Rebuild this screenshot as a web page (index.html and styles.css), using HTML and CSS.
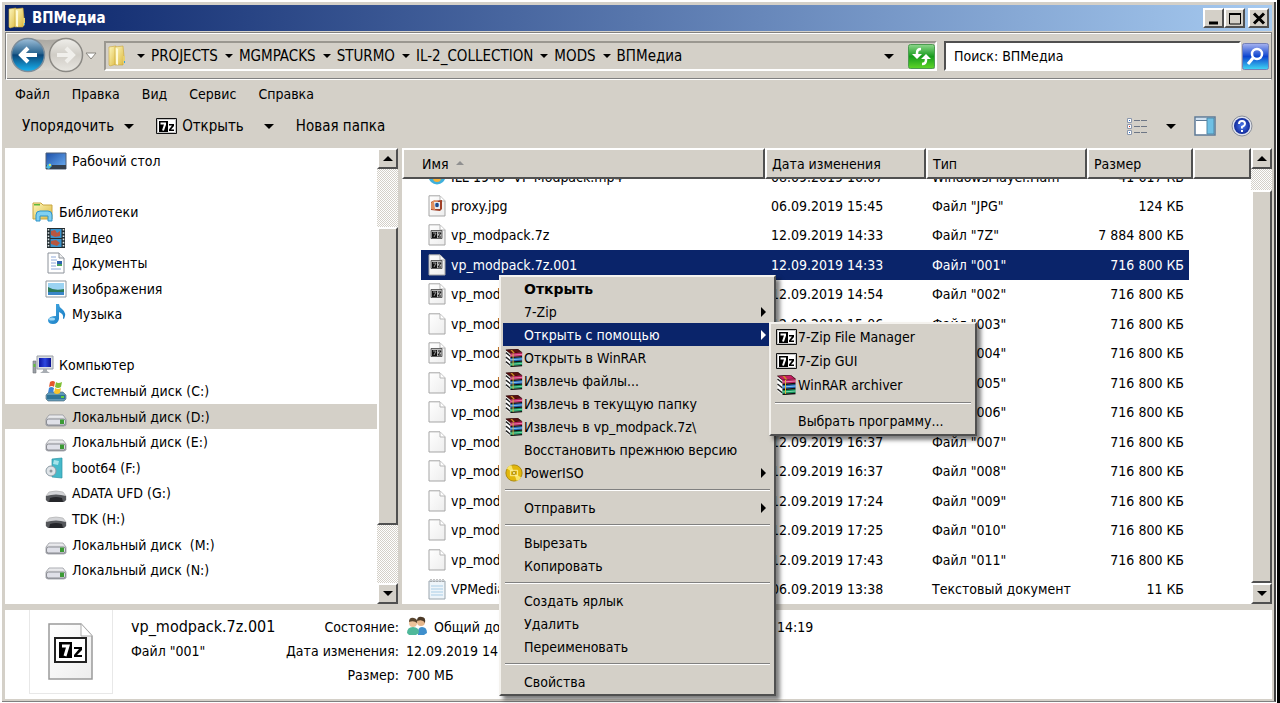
FILE: index.html
```html
<!DOCTYPE html>
<html lang="ru">
<head>
    <meta charset="UTF-8">
    <meta name="viewport" content="width=device-width, initial-scale=1.0">
    <title>ВПМедиа</title>
    <link rel="stylesheet" href="styles.css">
</head>
<body>
    <svg class="sprite" aria-hidden="true">
        <defs>
            <linearGradient id="gFolder" x1="0" y1="0" x2="1" y2="1"><stop offset="0" stop-color="#fdf7bd"/><stop offset="1" stop-color="#dcb83e"/></linearGradient>
            <linearGradient id="gPage" x1="0" y1="0" x2="1" y2="1"><stop offset="0" stop-color="#fff"/><stop offset="1" stop-color="#ededed"/></linearGradient>
            <linearGradient id="gDesk" x1="0" y1="0" x2="1" y2="1"><stop offset="0" stop-color="#1c4fa8"/><stop offset="1" stop-color="#6fb2f5"/></linearGradient>
            <linearGradient id="gDisk" x1="0" y1="0" x2="0" y2="1"><stop offset="0" stop-color="#f4f4f6"/><stop offset="1" stop-color="#a6a8b0"/></linearGradient>
            <linearGradient id="gBack" x1="0" y1="0" x2="0" y2="1"><stop offset="0" stop-color="#9fc0da"/><stop offset=".45" stop-color="#2a648f"/><stop offset=".5" stop-color="#0b4678"/><stop offset="1" stop-color="#18b4f2"/></linearGradient>
            <linearGradient id="gFwd" x1="0" y1="0" x2="0" y2="1"><stop offset="0" stop-color="#efeeea"/><stop offset=".5" stop-color="#d0cdc6"/><stop offset="1" stop-color="#e9e7e2"/></linearGradient>
            <linearGradient id="gBridge" x1="0" y1="0" x2="0" y2="1"><stop offset="0" stop-color="#a9a6a0"/><stop offset="1" stop-color="#dedbd4"/></linearGradient>
            <linearGradient id="gGreen" x1="0" y1="0" x2="0" y2="1"><stop offset="0" stop-color="#8fd78d"/><stop offset=".5" stop-color="#169c1c"/><stop offset="1" stop-color="#5fd628"/></linearGradient>
            <linearGradient id="gSearch" x1="0" y1="0" x2="0" y2="1"><stop offset="0" stop-color="#a9b4f0"/><stop offset=".5" stop-color="#0c44cf"/><stop offset="1" stop-color="#3fd8f4"/></linearGradient>
            <linearGradient id="gNote" x1="0" y1="0" x2="1" y2="1"><stop offset="0" stop-color="#4aaee6"/><stop offset="1" stop-color="#1478c0"/></linearGradient>
            <linearGradient id="gScreen" x1="0" y1="0" x2="1" y2="0"><stop offset="0" stop-color="#0a12a0"/><stop offset=".5" stop-color="#2d48e0"/><stop offset="1" stop-color="#0a1090"/></linearGradient>
            <radialGradient id="gHelp"><stop offset="0" stop-color="#4f7cf0"/><stop offset="1" stop-color="#10299a"/></radialGradient>
        </defs>

        <symbol id="folder" viewBox="0 0 20 22">
            <path d="M2 2l7-1 1 18-7 2-1-1z" fill="url(#gFolder)" stroke="#cda83a" stroke-width=".6"/>
            <path d="M8 2l8-1 1 10-1 9H8z" fill="url(#gFolder)" stroke="#c9a437" stroke-width=".6"/>
            <path d="M9 3l2 1v16l-2-1z" fill="#fffbd8"/>
            <path d="M16 11h2v7l-2 1z" fill="#e6cf70"/><path d="M17 16h1v2h-1z" fill="#39a0d8"/>
        </symbol>
        <symbol id="seven" viewBox="0 0 21 16">
            <path d="M.5.5h20v15H.5z" fill="#fff" stroke="#111"/><path d="M1.500 1.500h18v13h-18z" fill="none" stroke="#888" stroke-width=".5"/>
            <path d="M3 3h9v11H3z" fill="#000"/>
            <path d="M4.500 5.500h4.500v1L7 12.500" fill="none" stroke="#fff" stroke-width="2"/>
            <path d="M13 6h5v2l-3 3.500h3V13h-5v-1.500l3-4h-3z" fill="#000"/>
        </symbol>
        <symbol id="page" viewBox="0 0 18 22">
            <path d="M1 .8h11l5 5V21H1z" fill="url(#gPage)" stroke="#a5a5a5"/>
            <path d="M12 1v5h5" fill="#fff" stroke="#b5b5b5"/>
        </symbol>
        <symbol id="page7z" viewBox="0 0 18 22">
            <use href="#page"/>
            <path d="M3 6.500h11v8H3z" fill="#bbb" stroke="#444" stroke-width=".8"/>
            <path d="M4 8h5v6H4z" fill="#111"/><path d="M5 9h3l-2 4" fill="none" stroke="#999"/><path d="M10 9h3l-3 4h3" fill="none" stroke="#111"/>
        </symbol>
        <symbol id="pagejpg" viewBox="0 0 18 22">
            <use href="#page"/>
            <path d="M3 7l2-1 9-1v9l-2 2-9-1z" fill="#a04028"/><path d="M3 8l3-3 4 1-3 9-4-1z" fill="#e09060"/>
            <path d="M6 7h6v7H7z" fill="#eee"/><circle cx="9" cy="10" r="2.200" fill="#3f77c8"/><path d="M9 8v4" stroke="#123"/>
        </symbol>
        <symbol id="notepad" viewBox="0 0 18 22">
            <path d="M1 3h16v18H1z" fill="#eef5fa" stroke="#9aa5ad"/>
            <path d="M3 8h12M3 11h12M3 14h12M3 17h12" stroke="#a9cde6"/>
            <path d="M3 1v4M6 1v4M9 1v4M12 1v4M15 1v4" stroke="#888" stroke-dasharray="1 1"/>
        </symbol>
        <symbol id="media" viewBox="0 0 18 22">
            <circle cx="9" cy="11" r="8.500" fill="#3fb0dc"/><circle cx="9" cy="13" r="4" fill="#f5b23a"/>
        </symbol>
        <symbol id="desktop" viewBox="0 0 22 20">
            <path d="M1 2h20v16H1z" fill="url(#gDesk)" stroke="#4c5f78"/>
            <path d="M1 14h20v4H1z" fill="#35404d"/><path d="M2 14l3-2 2 3-3 3-3-1z" fill="#49b8e0"/><path d="M4 13h2v2H4z" fill="#cfe070"/>
        </symbol>
        <symbol id="libs" viewBox="0 0 22 20">
            <path d="M1 1h8l2 2h9v14H1z" fill="url(#gFolder)" stroke="#c9a640"/><path d="M2 2h6v1.500H2z" fill="#5fb83a"/>
            <path d="M4 19v-6q0-4 4-4h8q4 0 4 4v6h-4v-5H8v5z" fill="#7fd0f2" stroke="#2f93c8"/>
        </symbol>
        <symbol id="video" viewBox="0 0 22 22">
            <path d="M2 1h18v20H2z" fill="#222c30"/><path d="M5.500 2h11v9h-11zM5.500 12h11v8h-11z" fill="#3a93cc"/>
            <path d="M6 4l4-1 2 3 3-2v5l-5 1-4-2zM6 14l5-1 4 3-3 3-6-2z" fill="#b8563f"/>
            <path d="M3.500 2v18M18.500 2v18" stroke="#dde5e8" stroke-width="1.600" stroke-dasharray="1.600 1.600"/>
        </symbol>
        <symbol id="docs" viewBox="0 0 22 22">
            <path d="M3 1h11l5 5v15H3z" fill="#fff" stroke="#8c929a"/><path d="M14 1v5h5" fill="#eee" stroke="#8c929a"/>
            <path d="M6 5h5M6 8h6M6 11h5M6 14h5M6 17h10" stroke="#8fa9d8"/><path d="M12 9h5v5h-5z" fill="#2b62b0"/><path d="M12 12h5v2h-5z" fill="#49a060"/>
        </symbol>
        <symbol id="pics" viewBox="0 0 22 20">
            <path d="M1 2h20v16H1z" fill="#fff" stroke="#8f979e"/><path d="M3 4h16v12H3z" fill="#9bd3f2"/>
            <path d="M3 8q6 4 16 2v3H3z" fill="#2c7a58"/><path d="M3 13h16v3H3z" fill="#3a86c8"/>
        </symbol>
        <symbol id="music" viewBox="0 0 22 22">
            <path d="M11 1h3q0 3 3 5 5 4 2 10-1 0-1-1 1-4-4-6v7q-1 5-6 5-5 0-5-4 1-4 8-4z" fill="url(#gNote)"/><ellipse cx="7" cy="16" rx="3" ry="1.500" fill="#9ed8f7"/>
        </symbol>
        <symbol id="computer" viewBox="0 0 22 20">
            <path d="M1 6h3v12H1z" fill="#9aa0a6" stroke="#6e7378" stroke-width=".6"/><path d="M1.500 9h2v3h-2z" fill="#62c040"/>
            <path d="M5 1h16v13H5z" fill="#d9dde2" stroke="#9a9fa6"/><path d="M7 3h12v9H7z" fill="url(#gScreen)"/>
            <path d="M11 14h4v2l3 2H8l3-2z" fill="#a8adb3"/>
        </symbol>
        <symbol id="sysdisk" viewBox="0 0 22 22">
            <path d="M1 15l3-3h14l3 3v4l-2 2H3l-2-2z" fill="#5d99b8" stroke="#587080" stroke-width=".7"/><path d="M2 15h18v4H2z" fill="#2f7397"/><path d="M16 16h3v2h-3z" fill="#60d040"/>
            <path d="M5 2q3-2 5 0l-1 5q-2-2-5 0z" fill="#e4572c"/><path d="M11 2q2 2 6 0l-1 5q-3 2-6 0z" fill="#7fbf35"/>
            <path d="M4 8q2-2 5 0l-1 5q-3-2-5 0z" fill="#3b83d6"/><path d="M10 8q3 2 6 0l-1 5q-3 2-6 0z" fill="#f7c32c"/>
        </symbol>
        <symbol id="disk" viewBox="0 0 22 22">
            <path d="M4 9h14l3 4v6l-2 1H3l-2-1v-6z" fill="url(#gDisk)" stroke="#888b92" stroke-width=".7"/>
            <rect x="1.500" y="13" width="19" height="6" rx="2" fill="#dfe0e8" stroke="#8a8c92"/><path d="M15 13.500h4v4.500h-4z" fill="#3c9a35"/>
        </symbol>
        <symbol id="boot" viewBox="0 0 22 22">
            <path d="M7 2l10-1v20l-10-1z" fill="#45b9c9" stroke="#2c93a4" stroke-width=".7"/><path d="M9 3l5 1-1 4-5-1z" fill="#a6e4ea"/>
            <circle cx="6" cy="14" r="5" fill="#dfe4e8" stroke="#8b9aa3"/><circle cx="6" cy="14" r="1.500" fill="#8d969c"/>
        </symbol>
        <symbol id="usb" viewBox="0 0 22 22">
            <path d="M4 10q7-2 14 0l3 4v4l-2 1q-8-3-16 0l-2-1v-4z" fill="#d4d5d8" stroke="#aaa" stroke-width=".6"/>
            <path d="M1 14q10-3 20 0v4l-2 2H3l-2-2z" fill="#55575b"/><path d="M5 16q6-2 12 0l1 4H4z" fill="#25262a"/>
        </symbol>
        <symbol id="rar" viewBox="0 0 20 20">
            <path d="M1 2l5 4v14l-5-4z" fill="#fff"/>
            <path d="M1 4l5 4M1 9l5 4M1 14l5 4" stroke="#222" stroke-width="1.500"/>
            <path d="M1 1l13-1 5 4-13 1z" fill="currentColor" stroke="#200" stroke-width=".7"/>
            <path d="M6 5l13-1v4L6 9z" fill="#b8205c"/>
            <path d="M6 10l13-1v4L6 14z" fill="#1f66b8"/>
            <path d="M6 15l13-1v4L6 19z" fill="#12935a"/>
            <path d="M6 7l13-1" stroke="#ee8ab4"/><path d="M6 12l13-1" stroke="#8cc8f0"/><path d="M6 17l13-1" stroke="#80dcb0"/>
            <path d="M6 9.500l13-1M6 14.500l13-1M6 19.500l13-1" stroke="#111" stroke-width="1.300"/>
            <path d="M9 5v14" stroke="#d8b83c"/><path d="M6 1h2l3 3.500H9z" fill="#c98e24"/>
        </symbol>
        <symbol id="iso" viewBox="0 0 20 20">
            <circle cx="10" cy="10" r="9" fill="#e2b70c" stroke="#a8860a"/><path d="M10 10L2 5a9 9 0 0 1 5-4zM10 10l8 5a9 9 0 0 1-5 4z" fill="#f8e468"/>
            <path d="M6 7h8v6H6z" fill="none" stroke="#fff2a0"/><path d="M8.500 8.500h3v3h-3z" fill="#fff6c0" stroke="#a8860a"/>
        </symbol>
        <symbol id="people" viewBox="0 0 22 20">
            <path d="M12 19q-1-8 4-8t5 6l-3 2z" fill="#3f8fcc"/><circle cx="15" cy="6" r="4" fill="#e6b78c"/><path d="M11 5q0-5 5-4 4 0 3 6-2-4-8-2z" fill="#4c3a28"/>
            <path d="M1 17q0-6 6-6t6 6l-3 2H3z" fill="#4fb89a"/><circle cx="7" cy="7" r="4" fill="#edc39b"/><path d="M3 6q0-5 5-4 4 1 3 5-3-3-8-1z" fill="#5a4630"/>
        </symbol>
    </svg>

    <div class="window">
        <div class="titlebar">
            <svg class="title-icon"><use href="#folder"/></svg>
            <span class="title-text">ВПМедиа</span>
            <div class="title-buttons">
                <button class="btn-3d" aria-label="Свернуть"><svg width="14" height="13"><path d="M2 11h9" stroke="#000" stroke-width="3"/></svg></button>
                <button class="btn-3d" aria-label="Развернуть"><svg width="14" height="13"><path d="M1.500 1v11h11V1" fill="none" stroke="#000"/><path d="M1 2h12" stroke="#000" stroke-width="2"/></svg></button>
                <button class="btn-3d btn-close" aria-label="Закрыть"><svg width="14" height="13"><path d="M2 1.500l10 10M12 1.500l-10 10" stroke="#000" stroke-width="3"/></svg></button>
            </div>
        </div>

        <div class="navbar">
            <button class="nav-arrows" aria-label="Назад и вперёд">
                <svg width="92" height="38" viewBox="0 0 92 38">
                    <path d="M19 1q18 4 38 0v34q-20-4-38 0z" fill="url(#gBridge)"/>
                    <circle cx="19" cy="18" r="16.500" fill="url(#gBack)" stroke="#7d8d9a" stroke-width="1.500"/>
                    <path d="M28 18H12M19 11l-7 7 7 7" fill="none" stroke="#fff" stroke-width="4"/>
                    <circle cx="57" cy="18" r="16.500" fill="url(#gFwd)" stroke="#8b8984" stroke-width="1.500"/>
                    <path d="M48 18h16M57 11l7 7-7 7" fill="none" stroke="#f0efeb" stroke-width="4"/>
                    <path d="M77 16h10l-5 6z" fill="#fff" stroke="#8a8780"/>
                </svg>
            </button>
            <div class="address">
                <svg class="address-icon"><use href="#folder"/></svg>
                <nav class="crumbs">
                    <a href="#">PROJECTS</a>
                    <a href="#">MGMPACKS</a>
                    <a href="#">STURMO</a>
                    <a href="#">IL-2_COLLECTION</a>
                    <a href="#">MODS</a>
                    <a href="#">ВПМедиа</a>
                </nav>
                <span class="arrow-down address-drop"></span>
                <button class="icon-btn" aria-label="Обновить">
                    <svg width="27" height="25"><rect x=".5" y=".5" width="26" height="24" rx="2" fill="url(#gGreen)" stroke="#4c9a50"/>
                    <path d="M13 5q-4 0-4 4v3M14 20q4 0 4-4v-3" fill="none" stroke="#fff" stroke-width="2.500"/><path d="M4 10h10l-5 5zM13 15h10l-5-5z" fill="#fff"/></svg>
                </button>
            </div>
            <input class="search" type="text" value="Поиск: ВПМедиа" aria-label="Поиск">
            <button class="icon-btn search-btn" aria-label="Найти">
                <svg width="27" height="27"><rect x=".5" y=".5" width="26" height="26" rx="2" fill="url(#gSearch)" stroke="#7480b8"/>
                <circle cx="15" cy="11" r="5" fill="none" stroke="#fff" stroke-width="2.500"/><path d="M11 15l-5 6" stroke="#fff" stroke-width="3"/></svg>
            </button>
        </div>

        <div class="menubar">
            <button>Файл</button>
            <button>Правка</button>
            <button>Вид</button>
            <button>Сервис</button>
            <button>Справка</button>
        </div>

        <div class="toolbar">
            <button class="tool">Упорядочить <span class="arrow-down"></span></button>
            <button class="tool tool-open"><svg class="seven"><use href="#seven"/></svg>Открыть</button>
            <button class="tool" aria-label="Открыть с помощью"><span class="arrow-down"></span></button>
            <button class="tool">Новая папка</button>
            <div class="tool-right">
                <button class="tool" aria-label="Вид">
                    <svg width="22" height="20"><path d="M1.500 2.500h4v4h-4zM1.500 8.500h4v4h-4zM1.500 14.500h4v4h-4z" fill="#fff" stroke="#8a97ad"/><path d="M3 4h1v1H3zM3 16h1v1H3z" fill="#2a70d0"/><path d="M3 10h1v1H3z" fill="#d03020"/><path d="M8 4.500h13M8 10.500h13M8 16.500h13" stroke="#6d7685" stroke-dasharray="6 1"/></svg>
                </button>
                <span class="arrow-down"></span>
                <button class="tool" aria-label="Область просмотра">
                    <svg width="22" height="20"><path d="M1 1h20v18H1z" fill="#fff" stroke="#5d7a96" stroke-width="1.500"/><path d="M2 2h18v2H2z" fill="#cfe0f0"/><path d="M2 4.500h11" stroke="#5d7a96"/><path d="M13 2h7v16h-7z" fill="#6fc0e4" stroke="#4f88a8"/></svg>
                </button>
                <button class="tool help" aria-label="Справка">
                    <svg width="22" height="22"><circle cx="11" cy="11" r="10" fill="#dfe3ee" stroke="#8a8f9a"/><circle cx="11" cy="11" r="8" fill="url(#gHelp)"/><path d="M8 9q0-3 3-3t3 3q0 1.500-3 3v1.500" fill="none" stroke="#fff" stroke-width="2"/><path d="M10 15h2v2h-2z" fill="#fff"/></svg>
                </button>
            </div>
        </div>

        <div class="panes">
            <div class="sidebar">
                <ul class="tree">
                    <li class="sub"><svg><use href="#desktop"/></svg>Рабочий стол</li>
                    <li></li>
                    <li><svg><use href="#libs"/></svg>Библиотеки</li>
                    <li class="sub"><svg><use href="#video"/></svg>Видео</li>
                    <li class="sub"><svg><use href="#docs"/></svg>Документы</li>
                    <li class="sub"><svg><use href="#pics"/></svg>Изображения</li>
                    <li class="sub"><svg><use href="#music"/></svg>Музыка</li>
                    <li></li>
                    <li><svg><use href="#computer"/></svg>Компьютер</li>
                    <li class="sub"><svg><use href="#sysdisk"/></svg>Системный диск (C:)</li>
                    <li class="sub current"><svg><use href="#disk"/></svg>Локальный диск (D:)</li>
                    <li class="sub"><svg><use href="#disk"/></svg>Локальный диск (E:)</li>
                    <li class="sub"><svg><use href="#boot"/></svg>boot64 (F:)</li>
                    <li class="sub"><svg><use href="#usb"/></svg>ADATA UFD (G:)</li>
                    <li class="sub"><svg><use href="#usb"/></svg>TDK (H:)</li>
                    <li class="sub"><svg><use href="#disk"/></svg>Локальный диск&nbsp; (M:)</li>
                    <li class="sub"><svg><use href="#disk"/></svg>Локальный диск (N:)</li>
                </ul>
                <div class="scrollbar">
                    <button class="btn-3d" aria-label="Вверх"><span class="arrow-up"></span></button>
                    <div class="track"><div class="thumb thumb-tree"></div></div>
                    <button class="btn-3d" aria-label="Вниз"><span class="arrow-down"></span></button>
                </div>
            </div>

            <div class="files">
                <div class="file-list">
                    <table class="file-table">
                        <colgroup>
                            <col>
                            <col class="col-date">
                            <col class="col-type">
                            <col class="col-size">
                            <col class="col-rest">
                        </colgroup>
                        <thead>
                            <tr><th>Имя <span class="sort-mark"></span></th><th>Дата изменения</th><th>Тип</th><th>Размер</th><th></th></tr>
                        </thead>
                        <tbody>
                            <tr class="cut"><td><div><svg><use href="#media"/></svg>ILL-1946--VP-Modpack.mp4</div></td><td><div>08.09.2019 16:07</div></td><td><div>WindowsPlayer.Ham</div></td><td><div>41 617 КБ</div></td><td></td></tr>
                            <tr><td><svg><use href="#pagejpg"/></svg>proxy.jpg</td><td>06.09.2019 15:45</td><td>Файл "JPG"</td><td>124 КБ</td><td></td></tr>
                            <tr><td><svg><use href="#page7z"/></svg>vp_modpack.7z</td><td>12.09.2019 14:33</td><td>Файл "7Z"</td><td>7 884 800 КБ</td><td></td></tr>
                            <tr class="selected"><td><svg><use href="#page7z"/></svg>vp_modpack.7z.001</td><td>12.09.2019 14:33</td><td>Файл "001"</td><td>716 800 КБ</td><td></td></tr>
                            <tr><td><svg><use href="#page7z"/></svg>vp_modpack.7z.002</td><td>12.09.2019 14:54</td><td>Файл "002"</td><td>716 800 КБ</td><td></td></tr>
                            <tr><td><svg><use href="#page"/></svg>vp_modpack.7z.003</td><td>12.09.2019 15:06</td><td>Файл "003"</td><td>716 800 КБ</td><td></td></tr>
                            <tr><td><svg><use href="#page7z"/></svg>vp_modpack.7z.004</td><td>12.09.2019 15:21</td><td>Файл "004"</td><td>716 800 КБ</td><td></td></tr>
                            <tr><td><svg><use href="#page"/></svg>vp_modpack.7z.005</td><td>12.09.2019 15:48</td><td>Файл "005"</td><td>716 800 КБ</td><td></td></tr>
                            <tr><td><svg><use href="#page"/></svg>vp_modpack.7z.006</td><td>12.09.2019 16:12</td><td>Файл "006"</td><td>716 800 КБ</td><td></td></tr>
                            <tr><td><svg><use href="#page"/></svg>vp_modpack.7z.007</td><td>12.09.2019 16:37</td><td>Файл "007"</td><td>716 800 КБ</td><td></td></tr>
                            <tr><td><svg><use href="#page"/></svg>vp_modpack.7z.008</td><td>12.09.2019 16:37</td><td>Файл "008"</td><td>716 800 КБ</td><td></td></tr>
                            <tr><td><svg><use href="#page"/></svg>vp_modpack.7z.009</td><td>12.09.2019 17:24</td><td>Файл "009"</td><td>716 800 КБ</td><td></td></tr>
                            <tr><td><svg><use href="#page"/></svg>vp_modpack.7z.010</td><td>12.09.2019 17:25</td><td>Файл "010"</td><td>716 800 КБ</td><td></td></tr>
                            <tr><td><svg><use href="#page"/></svg>vp_modpack.7z.011</td><td>12.09.2019 17:43</td><td>Файл "011"</td><td>716 800 КБ</td><td></td></tr>
                            <tr><td><svg><use href="#notepad"/></svg>VPMedia.txt</td><td>06.09.2019 13:38</td><td>Текстовый документ</td><td>11 КБ</td><td></td></tr>
                        </tbody>
                    </table>
                </div>
                <div class="scrollbar">
                    <button class="btn-3d" aria-label="Вверх"><span class="arrow-up"></span></button>
                    <div class="track"><div class="thumb thumb-files"></div></div>
                    <button class="btn-3d" aria-label="Вниз"><span class="arrow-down"></span></button>
                </div>
            </div>
        </div>

        <div class="details">
            <div class="preview">
                <svg width="46" height="58" viewBox="0 0 46 58">
                    <path d="M1 1h32l11 12v43H1z" fill="url(#gPage)" stroke="#9a9a9a" stroke-width="1.500"/><path d="M33 1v12h11" fill="#fff" stroke="#aaa"/>
                    <path d="M7 15h31v24H7z" fill="#fff" stroke="#222" stroke-width="2"/>
                    <path d="M11 19h13v16H11z" fill="#000"/><path d="M14 23h6l-3 10" fill="none" stroke="#fff" stroke-width="3"/>
                    <path d="M26 24h8v3l-5 5h5v2h-8v-2l5-6h-5z" fill="#000"/>
                </svg>
            </div>
            <div class="details-name">
                <div class="name">vp_modpack.7z.001</div>
                <div>Файл "001"</div>
            </div>
            <dl class="props">
                <dt>Состояние:</dt><dd><svg class="people"><use href="#people"/></svg>Общий доступ</dd>
                <dt>Дата изменения:</dt><dd>12.09.2019 14:33</dd>
                <dt>Размер:</dt><dd>700 МБ</dd>
            </dl>
            <dl class="props">
                <dt>Дата создания:</dt><dd>12.09.2019 14:19</dd>
            </dl>
        </div>

        <div class="menu context-menu">
            <button class="default">Открыть</button>
            <button class="more">7-Zip</button>
            <button class="more active">Открыть с помощью</button>
            <button><svg><use href="#rar"/></svg>Открыть в WinRAR</button>
            <button><svg><use href="#rar"/></svg>Извлечь файлы...</button>
            <button><svg><use href="#rar"/></svg>Извлечь в текущую папку</button>
            <button><svg><use href="#rar"/></svg>Извлечь в vp_modpack.7z\</button>
            <button>Восстановить прежнюю версию</button>
            <button class="more"><svg><use href="#iso"/></svg>PowerISO</button>
            <hr>
            <button class="more">Отправить</button>
            <hr>
            <button>Вырезать</button>
            <button>Копировать</button>
            <hr>
            <button>Создать ярлык</button>
            <button>Удалить</button>
            <button>Переименовать</button>
            <hr>
            <button>Свойства</button>
        </div>

        <div class="menu open-with">
            <button><svg><use href="#seven"/></svg>7-Zip File Manager</button>
            <button><svg><use href="#seven"/></svg>7-Zip GUI</button>
            <button><svg><use href="#rar"/></svg>WinRAR archiver</button>
            <hr>
            <button>Выбрать программу...</button>
        </div>
    </div>
</body>
</html>
```
FILE: styles.css
```css
:root {
    --face: #d4d0c8;
    --shadow: #808080;
    --dark: #404040;
    --select: #0a246a;
}

* {
    box-sizing: border-box;
}

body {
    margin: 0;
    padding: 2px 1px 1px 2px;
    height: 100vh;
    overflow: hidden;
    background: #fff;
    border-right: 3px solid #000;
    font: 14px/20px "DejaVu Sans Condensed", "DejaVu Sans", sans-serif;
    color: #000;
}

button {
    font: inherit;
    color: inherit;
    background: none;
    border: none;
    padding: 0;
}

a {
    color: inherit;
    text-decoration: none;
}

.sprite {
    position: absolute;
    width: 0;
    height: 0;
}

.window {
    position: relative;
    height: 100%;
    display: flex;
    flex-direction: column;
    background: var(--face);
    border-right: 2px solid var(--dark);
    border-bottom: 1px solid var(--shadow);
    padding: 3px 2px 2px 3px;
}

/* 3D элементы */
.btn-3d,
.thumb {
    background: var(--face);
    border: 2px solid;
    border-color: #fff #505050 #505050 #fff;
}

.btn-3d {
    display: flex;
    align-items: center;
    justify-content: center;
}

.arrow-down,
.arrow-up {
    display: inline-block;
    border: 5px solid transparent;
    border-bottom-width: 0;
    border-top-color: #000;
}

.arrow-up {
    border-width: 0 5px 5px;
    border-bottom-color: #000;
}

/* Заголовок */
.titlebar {
    display: flex;
    align-items: center;
    height: 26px;
    padding: 0 3px 0 2px;
    background: linear-gradient(to right, var(--select), #a6caf0);
}

.title-icon {
    width: 20px;
    height: 22px;
}

.title-text {
    flex: 1;
    padding-left: 5px;
    color: #fff;
    font-size: 15px;
    font-weight: bold;
}

.title-buttons {
    display: flex;
}

.title-buttons .btn-3d {
    width: 21px;
    height: 20px;
}

.title-buttons .btn-close {
    margin-left: 3px;
}

/* Адресная строка */
.navbar {
    display: flex;
    align-items: center;
    height: 48px;
    margin-top: 1px;
    border: 1px solid var(--shadow);
    border-bottom-color: #fff;
    box-shadow: inset 1px 1px #fff, inset 0 -1px var(--shadow);
    padding: 0 2px 0 3px;
}

.nav-arrows {
    height: 38px;
}

.address {
    flex: 1;
    display: flex;
    align-items: center;
    height: 30px;
    margin-left: 3px;
    padding-left: 1px;
    border: 2px solid;
    border-color: #9a9790 #fff #fff #9a9790;
}

.address-icon {
    width: 20px;
    height: 22px;
}

.crumbs {
    flex: 1;
    display: flex;
    padding-left: 3px;
    font-size: 15px;
}

.crumbs a::before {
    content: "";
    display: inline-block;
    margin: 0 6px 3px 7px;
    border: 4px solid transparent;
    border-top-color: #000;
    border-bottom: none;
}

.address-drop {
    margin-right: 14px;
}

.icon-btn {
    display: flex;
}

.search {
    width: 297px;
    height: 30px;
    margin: 0 1px 0 7px;
    padding: 0 8px;
    border: 2px solid;
    border-color: #505050 #fff #fff #505050;
    border-radius: 0;
    background: #fff;
    font: inherit;
    color: inherit;
}

/* Меню и панель инструментов */
.menubar {
    display: flex;
    gap: 22px;
    padding: 4px 10px;
}

.toolbar {
    display: flex;
    align-items: center;
    height: 40px;
    padding: 0 19px 4px 17px;
    font-size: 15px;
}

.tool {
    display: flex;
    align-items: center;
}

.tool .arrow-down {
    margin: 0 22px 0 10px;
}

.tool-open {
    gap: 5px;
}

.toolbar .seven {
    width: 21px;
    height: 16px;
}

.tool-open + .tool {
    padding-left: 10px;
}

.tool-right {
    display: flex;
    align-items: center;
    gap: 18px;
    margin-left: auto;
}

.help {
    margin-left: -3px;
}

/* Панели */
.panes {
    flex: 1;
    display: flex;
    min-height: 0;
}

.sidebar {
    display: flex;
    width: 393px;
    background: #fff;
}

.tree {
    flex: 1;
    display: grid;
    grid-auto-rows: 1fr;
    margin: 0;
    padding: 0 0 21px;
    list-style: none;
}

.tree li {
    display: flex;
    align-items: center;
    gap: 5px;
    padding-left: 27px;
    min-height: 0;
}

.tree .sub {
    padding-left: 40px;
}

.tree .current {
    background: var(--face);
}

.tree svg {
    width: 22px;
    height: 22px;
}

.scrollbar {
    display: flex;
    flex-direction: column;
    width: 21px;
}

.scrollbar .btn-3d {
    height: 21px;
}

.track {
    flex: 1;
    position: relative;
    background: repeating-conic-gradient(#fff 0 25%, var(--face) 0 50%) 0 0 / 2px 2px;
}

.thumb {
    position: absolute;
    left: 0;
    right: 0;
}

.thumb-tree {
    top: 14%;
    bottom: 14%;
}

.thumb-files {
    top: 5%;
    bottom: 0;
}

.files {
    flex: 1;
    display: flex;
    margin-left: 4px;
    background: #fff;
}

.file-list {
    flex: 1;
}

.file-table {
    width: 100%;
    height: 100%;
    table-layout: fixed;
    border-collapse: separate;
    border-spacing: 0;
}

.col-date,
.col-type {
    width: 161px;
}

.col-size {
    width: 106px;
}

.col-rest {
    width: 58px;
}

.file-table th {
    height: 31px;
    padding: 0 0 0 5px;
    background: var(--face);
    border: 2px solid;
    border-color: #fff #505050 #505050 #fff;
    font-weight: normal;
    text-align: left;
}

.file-table th:first-child {
    padding-left: 18px;
}

.sort-mark {
    display: inline-block;
    margin: 0 0 4px 3px;
    border: 4px solid transparent;
    border-top: none;
    border-bottom-color: #909090;
}

.file-table td {
    padding: 0 0 0 6px;
    white-space: nowrap;
    background-clip: padding-box;
}

.file-table td:first-child {
    padding-left: 7px;
    border-left: 19px solid transparent;
}

.file-table td:nth-child(4) {
    padding: 0 5px 0 0;
    border-right: 4px solid transparent;
    text-align: right;
}

.file-table svg {
    width: 18px;
    height: 22px;
    margin: -4px 5px -4px 0;
    vertical-align: -2px;
}

/* Верхняя строка наполовину прокручена под заголовок */
.cut td {
    height: 12px;
}

.cut div {
    display: flex;
    align-items: flex-end;
    height: 12px;
    overflow: hidden;
    line-height: 28px;
}

.cut td:nth-child(4) div {
    justify-content: flex-end;
}

.cut svg {
    flex: none;
    margin: 0 5px 4px 0;
}

.selected td:not(:last-child) {
    background-color: var(--select);
    color: #fff;
}

/* Сведения о файле */
.details {
    display: flex;
    height: 89px;
    margin-top: 6px;
    background: #fff;
    line-height: 24px;
}

.preview {
    display: flex;
    align-items: center;
    justify-content: center;
    width: 84px;
    height: 84px;
    margin-left: 24px;
    border: 1px solid #e8e8e8;
    border-top: none;
}

.details-name {
    width: 150px;
    margin-left: 18px;
    padding-top: 5px;
}

.name {
    font-size: 16px;
    white-space: nowrap;
}

.props {
    display: grid;
    grid-template-columns: 118px 170px;
    grid-auto-rows: 24px;
    column-gap: 7px;
    margin: 0;
    padding-top: 5px;
    white-space: nowrap;
}

.props dt {
    text-align: right;
}

.props dd {
    margin: 0;
}

.people {
    width: 22px;
    height: 20px;
    margin-right: 6px;
    vertical-align: sub;
}

/* Контекстное меню */
.menu {
    position: absolute;
    display: flex;
    flex-direction: column;
    background: var(--face);
    border: 2px solid;
    border-color: #f4f2ee #505050 #505050 #f4f2ee;
    box-shadow: 4px 4px 4px rgba(0, 0, 0, 0.5);
}

.menu button {
    display: flex;
    align-items: center;
    position: relative;
    height: 23px;
    padding-left: 21px;
    text-align: left;
    white-space: nowrap;
}

.menu svg {
    width: 18px;
    height: 18px;
    margin: 0 1px 0 -19px;
    color: #5a1010;
}

.menu hr {
    width: calc(100% - 4px);
    height: 2px;
    margin: 5px 2px;
    border: none;
    border-top: 1px solid var(--shadow);
    border-bottom: 1px solid #fff;
}

.menu .default {
    font-family: "DejaVu Sans", sans-serif;
    font-weight: bold;
}

.more::after {
    content: "";
    position: absolute;
    right: 6px;
    border: 5px solid transparent;
    border-left-color: currentColor;
    border-right: none;
}

.menu .active {
    background: var(--select);
    color: #fff;
}

.context-menu {
    left: 497px;
    top: 273px;
    width: 277px;
    padding: 0 2px 1px;
}

.open-with {
    left: 767px;
    top: 320px;
    width: 208px;
    padding: 1px 2px;
}

.open-with button {
    height: 24px;
    padding-left: 25px;
}

.open-with svg {
    width: 21px;
    height: 20px;
    margin-left: -22px;
    color: #c81e64;
}
```
